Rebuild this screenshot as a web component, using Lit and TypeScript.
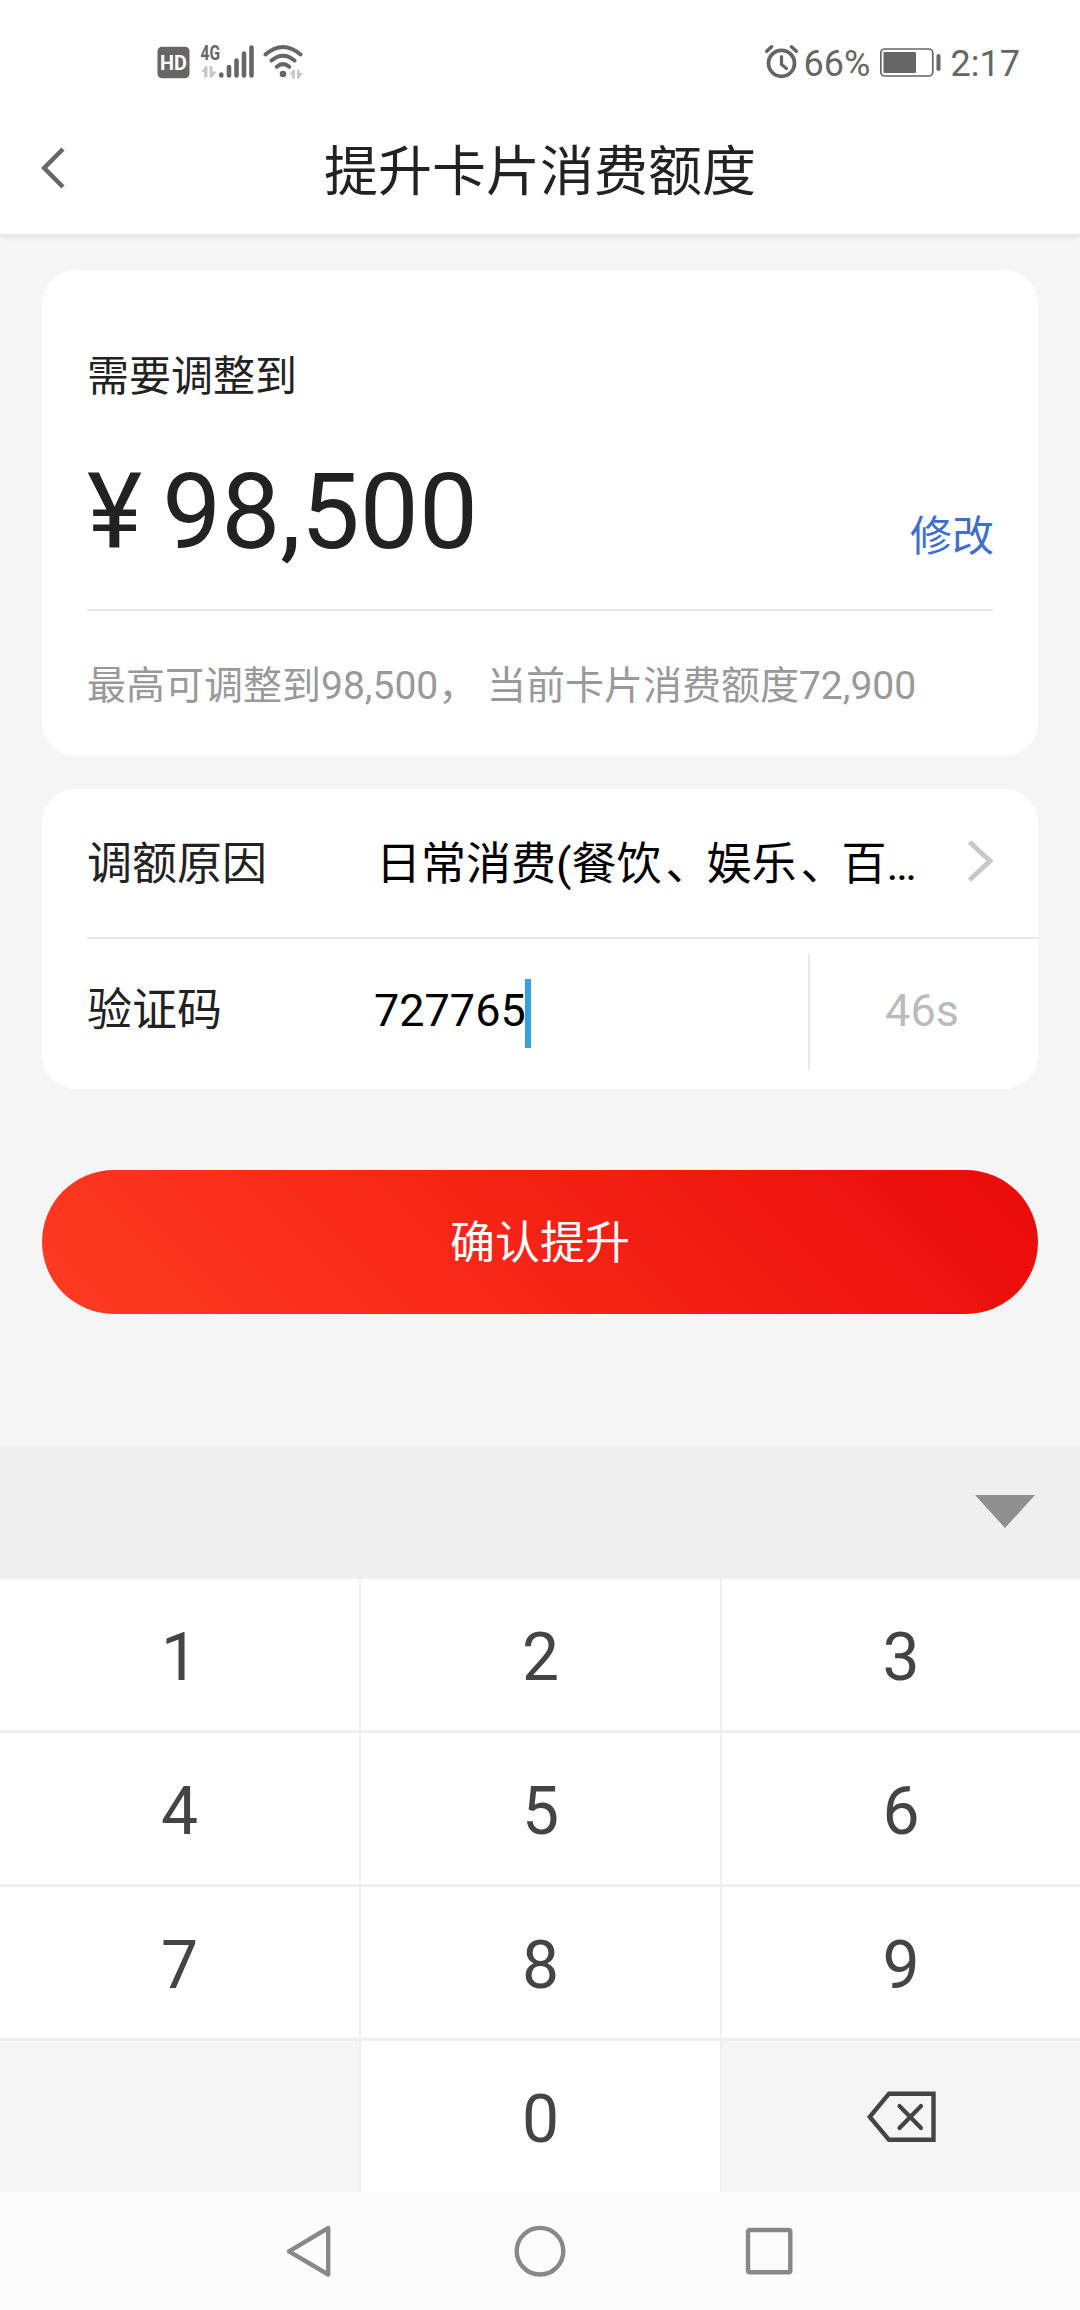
import { LitElement, html, css, svg } from "lit";
import { customElement, property } from "lit/decorators.js";

const FONT = css`Roboto, "Noto Sans CJK SC", sans-serif`;

@customElement("status-bar")
class StatusBar extends LitElement {
  static styles = css`
    :host { display: block; height: 102px; font-family: ${FONT}; color: #666; }
    .bar { display: flex; justify-content: space-between; height: 102px; box-sizing: border-box; padding: 40px 60px 0 157px; }
    .group { display: flex; height: 46px; }
    .icons { width: 150px; height: 46px; display: block; }
    .alarm { width: 34px; height: 46px; display: block; }
    .battery { width: 62px; height: 46px; display: block; margin-left: 10px; }
    .text { font-size: 36px; line-height: 48px; white-space: pre; }
    .percent { margin-left: 5px; width: 66px; }
    .time { margin-left: 9px; }
  `;
  render() {
    return html`<div class="bar">
      <svg class="icons" viewBox="157 40 150 46">
        <rect x="157.500" y="46.700" width="32" height="31.500" rx="4.500" fill="#666" />
        <text x="173.500" y="70" font-size="20.500" font-weight="700" text-anchor="middle" textLength="27" lengthAdjust="spacingAndGlyphs" fill="#fff">HD</text>
        <text x="200.500" y="60" font-size="21" font-weight="700" textLength="19.500" lengthAdjust="spacingAndGlyphs" fill="#666">4G</text>
        <g fill="#c8c8c8">
          <path d="M201.500 72 L205.500 66 H207.500 V77.500 H204 V72 Z M209.500 66 H212.500 V71.500 H217 L212 77.500 H209.500 Z" />
          <path d="M289 74.500 L293.500 69.500 H295 V78.500 H292 V74.500 Z M297 69.500 H299.500 V73 H303 L299 78.500 H297 Z" />
        </g>
        <g stroke="#666" stroke-width="4.600" stroke-linecap="round" fill="none">
          <path d="M221.300 74.500V75.500M229 67V75.500M236.500 60.500V75.500M244 53.500V75.500M251.500 47.500V75.500" />
          <path d="M265.500 54.500 Q283 39.500 300.500 54.500M271.500 60.500 Q283 51 294.500 60.500M276.800 66.800 Q283 61.500 289.200 66.800" stroke-width="4" />
        </g>
        <circle cx="283" cy="74" r="3.300" fill="#666" />
      </svg>
      <div class="group">
        <svg class="alarm" viewBox="765 40 34 46" fill="none" stroke="#666">
          <circle cx="781.500" cy="63.300" r="13" stroke-width="3.800" />
          <path d="M781.500 56.500V64.500L786.500 68.500" stroke-width="3.200" stroke-linecap="round" />
          <path d="M766.800 51.300L771.500 46.800M796.300 51.300L791.500 46.800" stroke-width="3.600" stroke-linecap="round" />
        </svg>
        <span class="text percent">66%</span>
        <svg class="battery" viewBox="880 40 62 46">
          <rect x="880.800" y="49" width="52" height="27" rx="4" fill="none" stroke="#666" stroke-width="1.700" />
          <rect x="883.500" y="52" width="32.500" height="21" rx="1" fill="#666" />
          <rect x="936.500" y="54" width="4" height="17" rx="2" fill="#666" />
        </svg>
        <span class="text time">2:17</span>
      </div>
    </div>`;
  }
}

@customElement("title-bar")
class TitleBar extends LitElement {
  static styles = css`
    :host { display: block; font-family: ${FONT}; }
    .bar { display: grid; grid-template-columns: 110px 1fr 110px; align-items: center; height: 132px; }
    .back { width: 26px; height: 44px; margin-left: 41px; display: block; }
    .title { text-align: center; font-size: 54px; line-height: 70px; color: #222; padding-top: 9px; }
  `;
  @property() heading = "";
  render() {
    return html`<div class="bar">
      <svg class="back" viewBox="0 0 26 44" fill="none" stroke="#666" stroke-width="4.500"><path d="M22 3L3.200 22L22 41" /></svg>
      <div class="title">${this.heading}</div>
    </div>`;
  }
}

@customElement("number-pad")
class NumberPad extends LitElement {
  static styles = css`
    :host { display: block; font-family: ${FONT}; }
    .tools { height: 134px; background: #efefef; display: flex; justify-content: flex-end; box-sizing: border-box; padding: 50px 45px 0 0; }
    .down { width: 60px; height: 33px; display: block; }
    .grid { display: grid; grid-template-columns: 359px 359px 358px; column-gap: 2px; grid-template-rows: repeat(4, 151px); row-gap: 3px; background: #efefef; height: 613px; }
    .key { display: flex; align-items: center; justify-content: center; background: #fff; color: #444; font-size: 66px; line-height: 80px; padding-top: 7px; box-sizing: border-box; }
    .special { background: #f5f5f5; padding: 0 0 0 1px; }
    .delete { width: 70px; height: 52px; display: block; }
  `;
  render() {
    return html`
      <div class="tools"><svg class="down" viewBox="0 0 60 33"><path d="M0 0H60L30 33Z" fill="#8f8f8f" /></svg></div>
      <div class="grid">
        ${["1", "2", "3", "4", "5", "6", "7", "8", "9"].map((n) => html`<div class="key">${n}</div>`)}
        <div class="key special"></div>
        <div class="key">0</div>
        <div class="key special">
          <svg class="delete" viewBox="0 0 70 52" fill="none" stroke="#444" stroke-width="4.400">
            <path d="M22 2.700H66.500V48.800H22L2.800 25.800Z" />
            <path d="M32.500 15L54 37M54 15L32.500 37" stroke-linecap="round" stroke-width="4.200" />
          </svg>
        </div>
      </div>`;
  }
}

@customElement("nav-bar")
class NavBar extends LitElement {
  static styles = css`
    :host { display: block; background: #fcfcfc; height: 118px; }
    .bar { display: flex; justify-content: center; gap: 178px; padding-top: 32px; }
    .icon { width: 54px; height: 54px; display: block; }
  `;
  private icon(shape: unknown) {
    return html`<svg class="icon" viewBox="0 0 54 54" fill="none" stroke="#888" stroke-width="4.400" stroke-linejoin="round">${shape}</svg>`;
  }
  render() {
    return html`<div class="bar">
      ${this.icon(svg`<path d="M47.200 4V50.500L8 27.300Z" />`)}
      ${this.icon(svg`<circle cx="27" cy="27.200" r="23.300" />`)}
      ${this.icon(svg`<rect x="3" y="6" width="42.300" height="42.300" rx="1.500" />`)}
    </div>`;
  }
}

@customElement("app-root")
class AppRoot extends LitElement {
  static styles = css`
    :host { display: block; width: 1080px; height: 2310px; overflow: hidden; background: #f5f5f5; font-family: ${FONT}; color: #222; }
    .top { background: #fff; height: 234px; box-shadow: 0 3px 0 #e9e9e9, 0 5px 5px rgba(0, 0, 0, 0.04); }
    .content { height: 1211px; box-sizing: border-box; padding: 36px 42px 0; }
    .card { background: #fff; border-radius: 34px; }
    .limit { height: 486px; box-sizing: border-box; padding: 77px 45px 0; }
    .caption { font-size: 42px; line-height: 60px; }
    .amount-row { display: flex; justify-content: space-between; height: 204px; box-sizing: border-box; padding-top: 46px; border-bottom: 2px solid #e8e8e8; }
    .amount { display: flex; gap: 20px; font-size: 105px; line-height: 120px; }
    .edit { font-size: 42px; line-height: 60px; color: #3f6fce; padding-top: 54px; margin-right: -1px; }
    .note { font-size: 39px; line-height: 60px; color: #999; padding-top: 45px; white-space: pre; }
    .form { margin-top: 33px; height: 300px; padding-left: 45px; }
    .row { display: flex; align-items: center; font-size: 45px; line-height: 64px; }
    .reason { height: 148px; box-sizing: content-box; border-bottom: 2px solid #e8e8e8; }
    .reason .label, .reason .value { padding-top: 4px; }
    .code { height: 144px; }
    .label { width: 289px; }
    .value { width: 591px; color: #000; white-space: nowrap; }
    .mark { padding-left: 4px; margin-right: -4px; }
    .chevron { width: 28px; height: 44px; display: block; margin-bottom: 4px; }
    .digits { display: flex; align-items: center; width: 434px; margin-left: -2px; color: #000; }
    .caret { width: 6px; height: 69px; background: #3b9de0; margin: 4px 0 0 -1px; }
    .timer { height: 116px; box-sizing: border-box; margin-top: 2px; padding: 0 4px 2px 0; flex: 1; display: flex; align-items: center; justify-content: center; border-left: 2px solid #e8e8e8; color: #bbb; }
    .confirm { margin-top: 81px; height: 144px; box-sizing: border-box; padding-bottom: 6px; border-radius: 72px; display: flex; align-items: center; justify-content: center; color: #fff; font-size: 45px; background: linear-gradient(45deg, #ff3c22, #ea0a0a); }
  `;
  render() {
    return html`
      <div class="top"><status-bar></status-bar><title-bar heading="提升卡片消费额度"></title-bar></div>
      <div class="content">
        <div class="card limit">
          <div class="caption">需要调整到</div>
          <div class="amount-row">
            <div class="amount"><span>¥</span><span>98,500</span></div>
            <div class="edit">修改</div>
          </div>
          <div class="note">最高可调整到98,500， 当前卡片消费额度72,900</div>
        </div>
        <div class="card form">
          <div class="row reason">
            <div class="label">调额原因</div>
            <div class="value">日常消费(餐饮<span class="mark">、</span>娱乐<span class="mark">、</span>百…</div>
            <svg class="chevron" viewBox="0 0 28 44" fill="none" stroke="#c8c8c8" stroke-width="5"><path d="M2.500 3L23 22L2.500 41" /></svg>
          </div>
          <div class="row code">
            <div class="label">验证码</div>
            <div class="digits"><span>727765</span><div class="caret"></div></div>
            <div class="timer">46s</div>
          </div>
        </div>
        <div class="confirm">确认提升</div>
      </div>
      <number-pad></number-pad>
      <nav-bar></nav-bar>`;
  }
}
